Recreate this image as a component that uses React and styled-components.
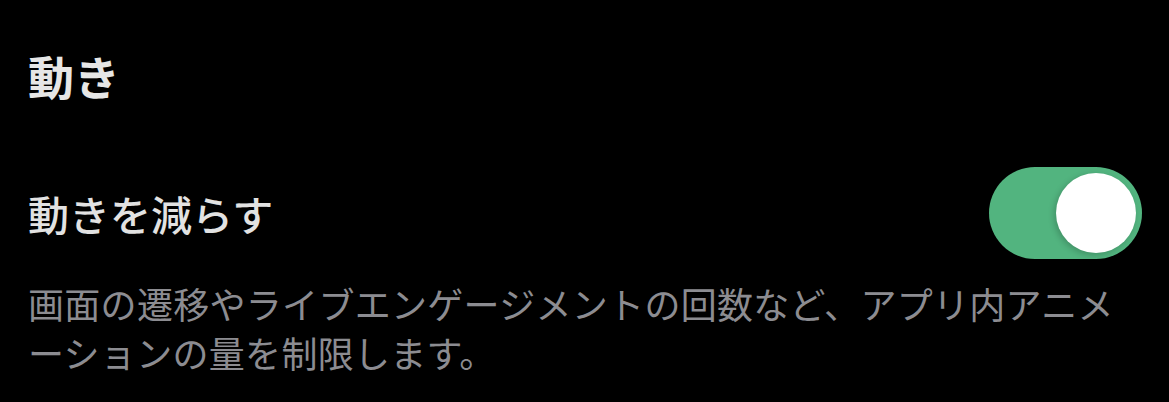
import styled, { createGlobalStyle } from "styled-components";

const GlobalStyle = createGlobalStyle`
  html, body {
    margin: 0;
    padding: 0;
    background: #000;
  }
  body {
    font-family: "Noto Sans CJK JP", "Noto Sans", sans-serif;
  }
`;

const Screen = styled.div`
  width: 1169px;
  height: 402px;
  background: #000;
  box-sizing: border-box;
  padding: 52px 28px 0 28px;
  display: flex;
  flex-direction: column;
  overflow: hidden;
`;

const SectionTitle = styled.h2`
  margin: 0;
  font-size: 46px;
  line-height: 46px;
  font-weight: 700;
  color: #e6e6e6;
`;

const SettingRow = styled.div`
  margin-top: 69px;
  display: flex;
  align-items: center;
  justify-content: space-between;
  height: 92px;
`;

const Label = styled.span`
  font-size: 41px;
  line-height: 41px;
  font-weight: 500;
  color: #e2e2e2;
`;

const Track = styled.button`
  position: relative;
  width: 153px;
  height: 92px;
  margin-right: -1px;
  border: none;
  padding: 0;
  border-radius: 46px;
  background: ${(p) => (p.$on ? "#52b47f" : "#39393d")};
  cursor: pointer;
`;

const Knob = styled.span`
  position: absolute;
  top: 6px;
  left: ${(p) => (p.$on ? "67px" : "6px")};
  width: 80px;
  height: 80px;
  border-radius: 50%;
  background: #fff;
  box-shadow: -2px 2px 6px rgba(0, 0, 0, 0.2);
`;

const Description = styled.p`
  margin: 20px 0 0 0;
  font-size: 36px;
  line-height: 49px;
  letter-spacing: 0.3px;
  color: #8c8c91;
`;

function Toggle({ on }) {
  return (
    <Track $on={on} aria-pressed={on}>
      <Knob $on={on} />
    </Track>
  );
}

export default function App() {
  return (
    <>
      <GlobalStyle />
      <Screen>
        <SectionTitle>動き</SectionTitle>
        <SettingRow>
          <Label>動きを減らす</Label>
          <Toggle on />
        </SettingRow>
        <Description>
          画面の遷移やライブエンゲージメントの回数など、アプリ内アニメーションの量を制限します。
        </Description>
      </Screen>
    </>
  );
}
